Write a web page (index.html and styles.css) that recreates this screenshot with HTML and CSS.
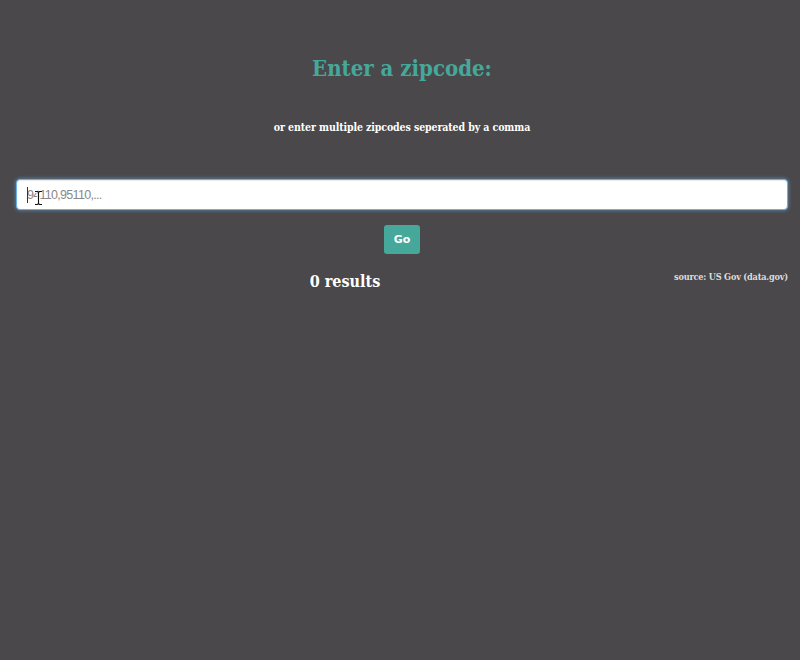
FILE: index.html
```html
<!DOCTYPE html>
<html>
<head>
<meta charset="utf-8">
<link rel="stylesheet" href="styles.css">
</head>
<body>
<div class="page">
  <h1 class="title">Enter a zipcode:</h1>
  <p class="subtitle">or enter multiple zipcodes seperated by a comma</p>
  <div class="field">
    <input class="zip-input" type="text" placeholder="94110,95110,...">
    <span class="caret"></span>
    <svg class="ibeam" width="9" height="16" viewBox="0 0 9 16"><path d="M1 1.5h2.5l1 1 1-1H8M4.5 2.5v11M1 14.5h2.5l1-1 1 1H8" fill="none" stroke="#fff" stroke-width="2.6"/><path d="M1 1.5h2.5l1 1 1-1H8M4.5 2.5v11M1 14.5h2.5l1-1 1 1H8" fill="none" stroke="#111" stroke-width="1.1"/></svg>
  </div>
  <div class="actions"><button class="go">Go</button></div>
  <div class="results-row">
    <div class="results">0 results</div>
    <div class="source">source: US Gov (data.gov)</div>
  </div>
</div>
</body>
</html>
```

FILE: styles.css
```css
html, body {
  margin: 0;
  padding: 0;
  background: #4a484a;
  height: 100%;
}
.page {
  padding: 0 12px 0 16px;
  font-family: "DejaVu Serif", serif;
  font-stretch: condensed;
  color: #fff;
}
.title {
  margin: 0;
  padding-top: 51px;
  text-align: center;
  color: #45a89a;
  font-size: 22px;
  font-weight: bold;
  line-height: 34px;
  letter-spacing: 0;
}
.subtitle {
  margin: 0;
  padding-top: 32px;
  text-align: center;
  font-size: 10.5px;
  font-weight: bold;
  line-height: 20px;
  letter-spacing: -0.1px;
}
.field {
  position: relative;
  margin-top: 42px;
}
.zip-input {
  display: block;
  box-sizing: border-box;
  width: 100%;
  height: 31px;
  border: 1px solid #66afe9;
  border-radius: 4px;
  box-shadow: 0 0 4px rgba(102, 175, 233, 0.7), inset 0 1px 1px rgba(0,0,0,0.08);
  background: #fff;
  padding: 0 10px;
  font-family: "Liberation Sans", sans-serif;
  font-size: 12.5px;
  letter-spacing: -0.7px;
  color: #333;
  outline: none;
}
.zip-input::placeholder {
  color: #888;
}
.caret {
  position: absolute;
  left: 11px;
  top: 8px;
  width: 1px;
  height: 16px;
  background: #333;
}
.ibeam {
  position: absolute;
  left: 18px;
  top: 11px;
}
.actions {
  display: flex;
  justify-content: center;
  margin-top: 15px;
}
.go {
  width: 36px;
  height: 29px;
  border: none;
  border-radius: 3px;
  background: #45a89a;
  color: #fff;
  font-family: "DejaVu Sans", sans-serif;
  font-weight: bold;
  font-size: 11px;
  padding: 0;
}
.results-row {
  display: flex;
  align-items: flex-start;
  margin-top: 12px;
}
.results {
  width: 662px;
  text-align: center;
  font-size: 16px;
  font-weight: bold;
  line-height: 31px;
  letter-spacing: 0;
}
.source {
  flex: 1;
  text-align: right;
  font-size: 9.1px;
  font-weight: bold;
  color: #ddd;
  line-height: 16px;
  padding-top: 3px;
  letter-spacing: -0.2px;
  white-space: nowrap;
}
```
